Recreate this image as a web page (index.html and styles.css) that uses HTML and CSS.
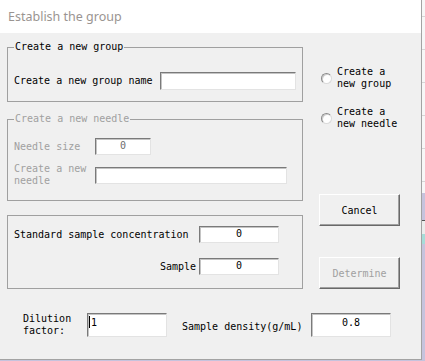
FILE: index.html
```html
<!DOCTYPE html>
<html>
<head>
    <title>Establish the group</title>
    <link rel="stylesheet" href="styles.css">
</head>
<body>
    <div class="screen">
        <div class="dialog">
            <div class="titlebar">Establish the group</div>
            <div class="client">
                <div class="top">
                    <div class="left">
                        <div class="group group-new">
                            <div class="group-title">Create a new group</div>
                            <div class="row row-name">
                                <span class="label label-name">Create a new group name</span>
                                <div class="edit edit-name"></div>
                            </div>
                        </div>
                        <div class="group group-needle disabled">
                            <div class="group-title">Create a new needle</div>
                            <div class="row row-size">
                                <span class="label label-needle">Needle size</span>
                                <div class="edit edit-size">0</div>
                            </div>
                            <div class="row row-needle">
                                <span class="label label-needle">Create a new<br>needle</span>
                                <div class="edit edit-needle"></div>
                            </div>
                        </div>
                        <div class="group group-sample">
                            <div class="row row-conc">
                                <span class="label label-conc">Standard sample concentration</span>
                                <div class="edit edit-num">0</div>
                            </div>
                            <div class="row row-sample">
                                <span class="label label-conc label-right">Sample</span>
                                <div class="edit edit-num">0</div>
                            </div>
                        </div>
                    </div>
                    <div class="right">
                        <div class="radio radio-group">
                            <span class="radio-dot"></span>
                            <span class="radio-text">Create a<br>new group</span>
                        </div>
                        <div class="radio radio-needle">
                            <span class="radio-dot"></span>
                            <span class="radio-text">Create a<br>new needle</span>
                        </div>
                        <button class="btn btn-cancel">Cancel</button>
                        <button class="btn btn-determine" disabled>Determine</button>
                    </div>
                </div>
                <div class="bottom">
                    <span class="label label-dilution">Dilution<br>factor:</span>
                    <div class="edit edit-wide edit-left"><span class="caret"></span>1</div>
                    <span class="label label-density">Sample density(g/mL)</span>
                    <div class="edit edit-wide">0.8</div>
                </div>
            </div>
        </div>
        <div class="backdrop">
            <div class="bd-light"></div>
            <div class="bd-lavender">
                <div class="bd-cell"></div>
                <div class="bd-teal"></div>
            </div>
        </div>
    </div>
</body>
</html>
```

FILE: styles.css
```css
body {
    margin: 0;
    padding: 0;
    background: #c6c3dd;
    font-family: "DejaVu Sans Mono", "Liberation Mono", monospace;
    font-size: 10px;
    line-height: 12px;
    color: #000;
}
.screen {
    display: flex;
    width: 425px;
    height: 361px;
    overflow: hidden;
}
.dialog {
    width: 421px;
    height: 359px;
    border-right: 1px solid #a3a3a3;
    border-bottom: 1px solid #a3a3a3;
    background: #f0f0f0;
    flex-shrink: 0;
}
.titlebar {
    height: 33px;
    line-height: 33px;
    padding-left: 8px;
    background: #fff;
    color: #9a9491;
    font-family: "Noto Sans", "Open Sans", sans-serif;
    font-size: 12.5px;
}
.top {
    display: flex;
}
.left {
    margin-left: 7px;
    width: 296px;
}
.group {
    box-sizing: border-box;
    border: 1px solid #a0a0a0;
    padding-left: 6px;
}
.group-title {
    width: fit-content;
    height: 12px;
    margin: -7px 0 0 0;
    padding: 0 1px;
    background: #f0f0f0;
}
.disabled,
.disabled .label {
    color: #a0a0a0;
}
.group-new {
    margin-top: 14px;
    height: 55px;
}
.group-needle {
    margin-top: 17px;
    height: 82px;
}
.group-sample {
    margin-top: 14px;
    height: 74px;
    padding-top: 10px;
}
.row {
    display: flex;
    align-items: center;
}
.row-name {
    margin-top: 19px;
    height: 18px;
}
.row-size {
    margin-top: 13px;
    height: 17px;
}
.row-needle {
    margin-top: 8px;
    height: 24px;
}
.row-conc {
    height: 17px;
}
.row-sample {
    margin-top: 15px;
    height: 17px;
}
.label {
    flex-shrink: 0;
    white-space: nowrap;
}
.label-name {
    width: 146px;
}
.label-needle {
    width: 81px;
}
.label-conc {
    width: 185px;
}
.label-right {
    box-sizing: border-box;
    text-align: right;
    padding-right: 3px;
}
.edit {
    box-sizing: border-box;
    background: #fff;
    border: 1px solid;
    border-color: #7a7a7a #e3e3e3 #e3e3e3 #7a7a7a;
    box-shadow: inset 1px 1px 0 #c4c4c4;
    text-align: center;
    line-height: 14px;
}
.edit-name {
    width: 136px;
    height: 18px;
}
.edit-size {
    width: 56px;
    height: 17px;
    color: #6d6d6d;
}
.edit-needle {
    width: 192px;
    height: 17px;
}
.edit-num {
    width: 80px;
    height: 17px;
}
.edit-wide {
    width: 80px;
    height: 24px;
    padding-top: 2px;
}
.edit-left {
    text-align: left;
    padding-left: 1px;
}
.caret {
    display: inline-block;
    width: 0;
    height: 12px;
    border-left: 1px solid #000;
    vertical-align: top;
    margin-right: 1px;
}
.right {
    margin-left: 16px;
    width: 81px;
}
.radio {
    display: flex;
    align-items: center;
}
.radio-group {
    margin-top: 33px;
}
.radio-needle {
    margin-top: 16px;
}
.radio-dot {
    box-sizing: border-box;
    width: 11px;
    height: 11px;
    margin: 0 5px 0 2px;
    border-radius: 50%;
    border: 1px solid;
    border-color: #8a8a8a #dadada #dadada #8a8a8a;
    background: #fff;
    box-shadow: inset 1px 1px 0 #cfcfcf;
}
.btn {
    display: block;
    box-sizing: border-box;
    width: 81px;
    height: 32px;
    padding: 0;
    background: #f0f0f0;
    border: 1px solid;
    border-color: #fff #696969 #696969 #fff;
    box-shadow: inset -1px -1px 0 #a0a0a0;
    font-family: inherit;
    font-size: 10px;
    color: #000;
}
.btn-cancel {
    margin-top: 64px;
}
.btn-determine {
    margin-top: 31px;
    color: #a0a0a0;
}
.bottom {
    display: flex;
    align-items: flex-start;
    margin-top: 24px;
}
.label-dilution {
    margin-left: 23px;
    width: 64px;
    white-space: normal;
}
.label-density {
    margin: 8px 0 0 15px;
    width: 129px;
}
.backdrop {
    flex: 1;
    display: flex;
    flex-direction: column;
}
.bd-light {
    height: 193px;
    background: #f7f7f7 repeating-linear-gradient(to bottom, transparent 0, transparent 16px, #d6d6d6 16px, #d6d6d6 17px, transparent 17px, transparent 33px);
}
.bd-lavender {
    flex: 1;
    padding-top: 27px;
}
.bd-cell {
    height: 13px;
    background: #ececec;
    border-top: 1px solid #555;
}
.bd-teal {
    height: 10px;
    background: #a6dcd8;
}
```
